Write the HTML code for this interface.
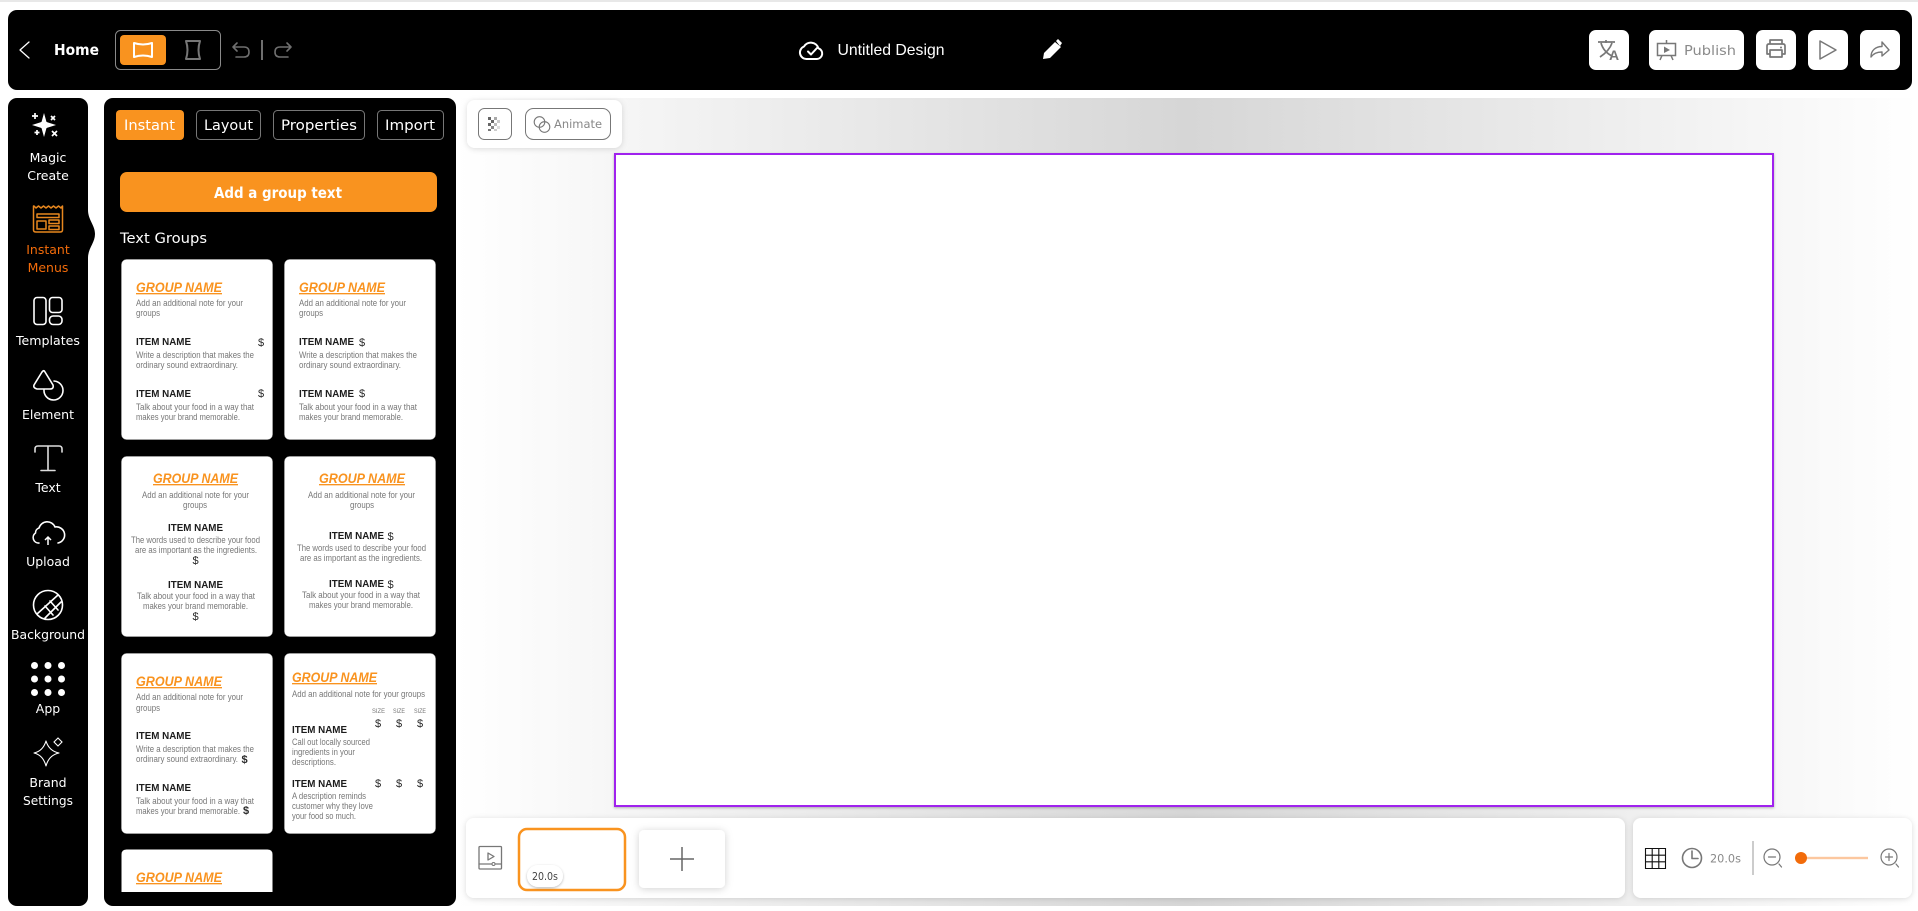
<!DOCTYPE html>
<html lang="en">
<head>
<meta charset="utf-8">
<title>Untitled Design</title>
<style>
html,body{margin:0;padding:0;width:1918px;height:911px;overflow:hidden;background:#fff}
svg{display:block;position:absolute;left:0;top:0}
text{white-space:pre}
.m{font-family:"DejaVu Sans",sans-serif}
.l{font-family:"Liberation Sans",sans-serif}
.side{font-size:12.5px;fill:#fff;text-anchor:middle}
.gn{font-family:"Liberation Sans",sans-serif;font-weight:700;font-style:italic;font-size:13.5px;fill:#f9931f;text-decoration:underline}
.n{font-family:"Liberation Sans",sans-serif;font-size:9px;fill:#777}
.i{font-family:"Liberation Sans",sans-serif;font-size:10.3px;fill:#1c1c1c;font-weight:700}
.d{font-family:"Liberation Sans",sans-serif;font-size:11px;fill:#2a2a2a}
.s{font-family:"Liberation Sans",sans-serif;font-size:6.5px;fill:#777}
.ic{fill:none;stroke:#fff;stroke-width:1.6;stroke-linecap:round;stroke-linejoin:round}
.gi{fill:none;stroke:#777;stroke-width:1.6;stroke-linecap:round;stroke-linejoin:round}
</style>
</head>
<body>
<svg width="1918" height="911" viewBox="0 0 1918 911" xmlns="http://www.w3.org/2000/svg">
<defs>
<linearGradient id="bg" gradientUnits="userSpaceOnUse" x1="456" y1="0" x2="1918" y2="0">
<stop offset="0" stop-color="#fff"/><stop offset="0.5" stop-color="#d6d6d6"/><stop offset="1" stop-color="#fff"/>
</linearGradient>
<filter id="sh" x="-10%" y="-30%" width="120%" height="160%"><feDropShadow dx="0" dy="1" stdDeviation="3" flood-color="#000" flood-opacity=".14"/></filter>
<filter id="sh2" x="-30%" y="-30%" width="160%" height="160%"><feDropShadow dx="0" dy="1" stdDeviation="4" flood-color="#000" flood-opacity=".18"/></filter>
<filter id="sh3" x="-30%" y="-30%" width="160%" height="170%"><feDropShadow dx="0" dy="1" stdDeviation="1.2" flood-color="#000" flood-opacity=".28"/></filter>
<clipPath id="panelclip"><rect x="104" y="98" width="352" height="794"/></clipPath>
</defs>

<rect x="0" y="0" width="1918" height="2" fill="#e8e8e8"/>
<rect x="456" y="98" width="1462" height="808" fill="url(#bg)"/>

<!-- canvas -->
<rect x="615" y="154" width="1158" height="652" fill="#fff" stroke="#a024ee" stroke-width="2" filter="url(#sh3)"/>

<!-- top bar -->
<rect x="8" y="10" width="1904" height="80" rx="9" fill="#000"/>
<path d="M29 42 L20 50 L29 58" fill="none" stroke="#fff" stroke-width="1.3" stroke-linecap="round" stroke-linejoin="round"/>
<text class="m" x="54" y="55" font-size="15" font-weight="700" fill="#fff" textLength="45" lengthAdjust="spacingAndGlyphs">Home</text>
<rect x="115.500" y="30.500" width="105" height="39" rx="5" fill="none" stroke="#8a8a8a"/>
<rect x="120" y="35" width="46" height="30" rx="4" fill="#f9931f"/>
<path d="M134 43 Q143 46 152 43 V57 Q143 54 134 57 Z" fill="none" stroke="#fff" stroke-width="2" stroke-linejoin="round"/>
<path d="M186 41 H200 Q197 50 200 59 H186 Q189 50 186 41 Z" fill="none" stroke="#777" stroke-width="2" stroke-linejoin="round"/>
<path d="M237 43 L233 47 L237 51 M233 47 H244 Q249 47 249 52 Q249 57 244 57 H236" fill="none" stroke="#6f6f6f" stroke-width="1.6" stroke-linecap="round" stroke-linejoin="round"/>
<rect x="261" y="40" width="2" height="20" fill="#6f6f6f"/>
<path d="M287 43 L291 47 L287 51 M291 47 H280 Q275 47 275 52 Q275 57 280 57 H288" fill="none" stroke="#6f6f6f" stroke-width="1.6" stroke-linecap="round" stroke-linejoin="round"/>

<path d="M807 59 H817 A5.500 5.500 0 0 0 818.500 48.300 A8 8 0 0 0 804 46.500 A6.500 6.500 0 0 0 807 59 Z" fill="none" stroke="#fff" stroke-width="2" stroke-linejoin="round"/>
<path d="M808 51.500 L811 54.500 L817 48" fill="none" stroke="#fff" stroke-width="2" stroke-linecap="round" stroke-linejoin="round"/>
<text class="l" x="837.500" y="55" font-size="16" fill="#fff" textLength="107" lengthAdjust="spacingAndGlyphs">Untitled Design</text>
<path d="M1043 59 L1044 53 L1055 42 L1061 47 L1050 58 Z" fill="#fff"/><path d="M1056 41 L1058 39 L1062 43 L1060 46 Z" fill="#fff"/>

<rect x="1589" y="30" width="40" height="40" rx="7" fill="#fff"/>
<path d="M1598 42 H1615 M1606 40 V43 M1601 43 C1603 50 1608 54 1612 56 M1612 43 C1610 49 1606 53 1600 57" fill="none" stroke="#777" stroke-width="1.7"/>
<text class="l" x="1609" y="60" font-size="14" font-weight="700" fill="#777">A</text>

<rect x="1649" y="30" width="95" height="40" rx="7" fill="#fff"/>
<path d="M1657.500 43.500 H1675.500 V55.500 H1657.500 Z M1666.500 40 V43.500 M1662 55.500 L1660 60 M1671 55.500 L1673 60" fill="none" stroke="#777" stroke-width="1.500"/>
<path d="M1664 46.500 L1670 50 L1664 53 Z" fill="#777"/>
<text class="m" x="1684" y="55" font-size="13.500" fill="#8a8a8a" textLength="52" lengthAdjust="spacingAndGlyphs">Publish</text>

<rect x="1756" y="30" width="40" height="40" rx="7" fill="#fff"/>
<path d="M1770 44 V40 H1782 V44 M1770 54 H1767 V46 Q1767 44 1769 44 H1783 Q1785 44 1785 46 V54 H1782 M1770 50 H1782 V57 H1770 Z" fill="none" stroke="#777" stroke-width="1.700" stroke-linejoin="round"/>
<circle cx="1781" cy="47.500" r="1" fill="#777"/>

<rect x="1808" y="30" width="40" height="40" rx="7" fill="#fff"/>
<path d="M1820 41 V59 L1836 50 Z" fill="none" stroke="#777" stroke-width="1.500" stroke-linejoin="round"/>

<rect x="1860" y="30" width="40" height="40" rx="7" fill="#fff"/>
<path d="M1871 57 C1871 50 1876 46.500 1882 46.500 V42 L1889 50 L1882 56 V52 C1877 52 1873 54 1871 57 Z" fill="none" stroke="#777" stroke-width="1.400" stroke-linejoin="round"/>

<!-- sidebar -->
<rect x="8" y="98" width="80" height="808" rx="9" fill="#000"/>
<path d="M88 210 C88 220 95 225 95 234 C95 243 88 248 88 258 Z" fill="#000"/>

<path d="M44 113 L46.500 122 L56 125 L46.500 128 L44 137 L41.500 128 L32 125 L41.500 122 Z" fill="#fff"/>
<circle cx="44" cy="125" r="4" fill="#fff"/>
<path d="M35 113 V119 M32 116 H38 M51 116 L55 120 M55 116 L51 120 M52 131 L57 136 M57 131 L52 136 M37 130 V135 M34.500 132.500 H39.500" stroke="#fff" stroke-width="1.700" fill="none"/>
<text class="m side" x="48" y="162">Magic</text>
<text class="m side" x="48" y="180">Create</text>

<g fill="none" stroke="#e8871e" stroke-width="1.500" stroke-linejoin="round">
<path d="M34 206 L36 208 L38.500 206 L41 208 L43.500 206 L46 208 L48.500 206 L51 208 L53.500 206 L56 208 L58.500 206 L61 208 L62.500 206 V230 Q62.500 232 60 232 H36 Q33.500 232 33.500 230 V206 Z"/>
<rect x="37" y="214" width="22" height="3.500"/><rect x="37" y="221" width="9" height="8"/><rect x="49" y="220" width="10" height="3.500"/><rect x="49" y="226" width="10" height="3.500"/>
</g>
<text class="m side" x="48" y="254" style="fill:#f26b0a">Instant</text>
<text class="m side" x="48" y="272" style="fill:#f26b0a">Menus</text>

<rect x="34" y="297.500" width="12" height="27" rx="3" class="ic"/>
<rect x="49.500" y="297.500" width="12.500" height="15" rx="3" class="ic"/>
<rect x="49.500" y="316" width="12.500" height="8.500" rx="3.500" class="ic"/>
<text class="m side" x="48" y="345" textLength="64" lengthAdjust="spacingAndGlyphs">Templates</text>

<path d="M43 371 Q44 370 45 372 L53 385 Q54 389 50 389 H37 Q33 388 34 385 L42 372 Z" class="ic"/>
<path d="M54 381 A9.500 9.500 0 1 1 44 390" class="ic"/>
<text class="m side" x="48" y="419" textLength="52" lengthAdjust="spacingAndGlyphs">Element</text>

<path d="M35 452 V449 Q35 446 38 446 H59 Q62 446 62 449 V452 M48 446 V470 M41 470.500 H55" fill="none" stroke="#ddd" stroke-width="1.600" stroke-linecap="round"/>
<text class="m side" x="48" y="492">Text</text>

<path d="M39 543 A5.500 5.500 0 0 1 35.500 533 A5 5 0 0 1 39 528 A8.500 8.500 0 0 1 55 527 A7 7 0 0 1 58 543" class="ic"/>
<path d="M48 545 V537 M45 540 L48 537 L51 540" fill="none" stroke="#fff" stroke-width="1.500"/>
<text class="m side" x="48" y="566">Upload</text>

<circle cx="48" cy="605" r="14.500" class="ic"/>
<path d="M37 614 L58 595 M45 618 L61 602 M45 606 L53 615 M50 601 L58 610" class="ic"/>
<text class="m side" x="48" y="639" textLength="74" lengthAdjust="spacingAndGlyphs">Background</text>

<g fill="#fff">
<circle cx="34.500" cy="665.500" r="3.500"/><circle cx="48" cy="665.500" r="3.500"/><circle cx="61.500" cy="665.500" r="3.500"/>
<circle cx="34.500" cy="679" r="3.500"/><circle cx="48" cy="679" r="3.500"/><circle cx="61.500" cy="679" r="3.500"/>
<circle cx="34.500" cy="692.500" r="3.500"/><circle cx="48" cy="692.500" r="3.500"/><circle cx="61.500" cy="692.500" r="3.500"/>
</g>
<text class="m side" x="48" y="713">App</text>

<path d="M46 741 Q49 751 59 753 Q49 755 46 766 Q43 755 34 753 Q43 751 46 741 Z" fill="none" stroke="#fff" stroke-width="1.100" stroke-linejoin="round"/>
<path d="M58 738 L62 742 L58 746 L54 742 Z" fill="none" stroke="#fff" stroke-width="1.100"/>
<text class="m side" x="48" y="787">Brand</text>
<text class="m side" x="48" y="805" textLength="50" lengthAdjust="spacingAndGlyphs">Settings</text>

<!-- panel -->
<rect x="104" y="98" width="352" height="808" rx="9" fill="#000"/>
<rect x="116" y="110" width="68" height="30" rx="4" fill="#f9931f"/>
<text class="m" x="124" y="130" font-size="14" fill="#fff" textLength="51" lengthAdjust="spacingAndGlyphs">Instant</text>
<rect x="196.500" y="110.500" width="64" height="29" rx="4" fill="none" stroke="#777"/>
<text class="m" x="204" y="130" font-size="14" fill="#fff" textLength="49" lengthAdjust="spacingAndGlyphs">Layout</text>
<rect x="273.500" y="110.500" width="91" height="29" rx="4" fill="none" stroke="#777"/>
<text class="m" x="281" y="130" font-size="14" fill="#fff" textLength="76" lengthAdjust="spacingAndGlyphs">Properties</text>
<rect x="377.500" y="110.500" width="66" height="29" rx="4" fill="none" stroke="#777"/>
<text class="m" x="385" y="130" font-size="14" fill="#fff" textLength="50" lengthAdjust="spacingAndGlyphs">Import</text>
<rect x="120" y="172" width="317" height="40" rx="7" fill="#f9931f"/>
<text class="m" x="214" y="198" font-size="15" font-weight="700" fill="#fff" textLength="128" lengthAdjust="spacingAndGlyphs">Add a group text</text>
<text class="m" x="120" y="243" font-size="14" fill="#fff" textLength="87" lengthAdjust="spacingAndGlyphs">Text Groups</text>

<g clip-path="url(#panelclip)">
<!-- card 1 -->
<rect x="121.500" y="259.500" width="151" height="180" rx="5" fill="#fff" stroke="#bbb" stroke-width=".5"/>
<text class="gn" x="136" y="292" textLength="86" lengthAdjust="spacingAndGlyphs">GROUP NAME</text>
<text class="n" x="136" y="306" textLength="107" lengthAdjust="spacingAndGlyphs">Add an additional note for your</text>
<text class="n" x="136" y="316" textLength="24" lengthAdjust="spacingAndGlyphs">groups</text>
<text class="i" x="136" y="345" textLength="55" lengthAdjust="spacingAndGlyphs">ITEM NAME</text>
<text class="d" x="258" y="346">$</text>
<text class="n" x="136" y="358" textLength="118" lengthAdjust="spacingAndGlyphs">Write a description that makes the</text>
<text class="n" x="136" y="368" textLength="102" lengthAdjust="spacingAndGlyphs">ordinary sound extraordinary.</text>
<text class="i" x="136" y="397" textLength="55" lengthAdjust="spacingAndGlyphs">ITEM NAME</text>
<text class="d" x="258" y="397">$</text>
<text class="n" x="136" y="410" textLength="118" lengthAdjust="spacingAndGlyphs">Talk about your food in a way that</text>
<text class="n" x="136" y="420" textLength="104" lengthAdjust="spacingAndGlyphs">makes your brand memorable.</text>

<!-- card 2 -->
<rect x="284.500" y="259.500" width="151" height="180" rx="5" fill="#fff" stroke="#bbb" stroke-width=".5"/>
<text class="gn" x="299" y="292" textLength="86" lengthAdjust="spacingAndGlyphs">GROUP NAME</text>
<text class="n" x="299" y="306" textLength="107" lengthAdjust="spacingAndGlyphs">Add an additional note for your</text>
<text class="n" x="299" y="316" textLength="24" lengthAdjust="spacingAndGlyphs">groups</text>
<text class="i" x="299" y="345" textLength="55" lengthAdjust="spacingAndGlyphs">ITEM NAME</text>
<text class="d" x="359" y="346">$</text>
<text class="n" x="299" y="358" textLength="118" lengthAdjust="spacingAndGlyphs">Write a description that makes the</text>
<text class="n" x="299" y="368" textLength="102" lengthAdjust="spacingAndGlyphs">ordinary sound extraordinary.</text>
<text class="i" x="299" y="397" textLength="55" lengthAdjust="spacingAndGlyphs">ITEM NAME</text>
<text class="d" x="359" y="397">$</text>
<text class="n" x="299" y="410" textLength="118" lengthAdjust="spacingAndGlyphs">Talk about your food in a way that</text>
<text class="n" x="299" y="420" textLength="104" lengthAdjust="spacingAndGlyphs">makes your brand memorable.</text>

<!-- card 3 -->
<rect x="121.500" y="456.500" width="151" height="180" rx="5" fill="#fff" stroke="#bbb" stroke-width=".5"/>
<text class="gn" x="153" y="483" textLength="85" lengthAdjust="spacingAndGlyphs">GROUP NAME</text>
<text class="n" x="142" y="498" textLength="107" lengthAdjust="spacingAndGlyphs">Add an additional note for your</text>
<text class="n" x="183" y="508" textLength="24" lengthAdjust="spacingAndGlyphs">groups</text>
<text class="i" x="168" y="531" textLength="55" lengthAdjust="spacingAndGlyphs">ITEM NAME</text>
<text class="n" x="131" y="543" textLength="129" lengthAdjust="spacingAndGlyphs">The words used to describe your food</text>
<text class="n" x="135" y="553" textLength="122" lengthAdjust="spacingAndGlyphs">are as important as the ingredients.</text>
<text class="d" x="192.500" y="564">$</text>
<text class="i" x="168" y="588" textLength="55" lengthAdjust="spacingAndGlyphs">ITEM NAME</text>
<text class="n" x="137" y="599" textLength="118" lengthAdjust="spacingAndGlyphs">Talk about your food in a way that</text>
<text class="n" x="143" y="609" textLength="105" lengthAdjust="spacingAndGlyphs">makes your brand memorable.</text>
<text class="d" x="192.500" y="620">$</text>

<!-- card 4 -->
<rect x="284.500" y="456.500" width="151" height="180" rx="5" fill="#fff" stroke="#bbb" stroke-width=".5"/>
<text class="gn" x="319" y="483" textLength="86" lengthAdjust="spacingAndGlyphs">GROUP NAME</text>
<text class="n" x="308" y="498" textLength="107" lengthAdjust="spacingAndGlyphs">Add an additional note for your</text>
<text class="n" x="350" y="508" textLength="24" lengthAdjust="spacingAndGlyphs">groups</text>
<text class="i" x="329" y="539" textLength="55" lengthAdjust="spacingAndGlyphs">ITEM NAME</text>
<text class="d" x="387.500" y="540">$</text>
<text class="n" x="297" y="551" textLength="129" lengthAdjust="spacingAndGlyphs">The words used to describe your food</text>
<text class="n" x="300" y="561" textLength="122" lengthAdjust="spacingAndGlyphs">are as important as the ingredients.</text>
<text class="i" x="329" y="587" textLength="55" lengthAdjust="spacingAndGlyphs">ITEM NAME</text>
<text class="d" x="387.500" y="588">$</text>
<text class="n" x="302" y="598" textLength="118" lengthAdjust="spacingAndGlyphs">Talk about your food in a way that</text>
<text class="n" x="309" y="608" textLength="104" lengthAdjust="spacingAndGlyphs">makes your brand memorable.</text>

<!-- card 5 -->
<rect x="121.500" y="653.500" width="151" height="180" rx="5" fill="#fff" stroke="#bbb" stroke-width=".5"/>
<text class="gn" x="136" y="686" textLength="86" lengthAdjust="spacingAndGlyphs">GROUP NAME</text>
<text class="n" x="136" y="700" textLength="107" lengthAdjust="spacingAndGlyphs">Add an additional note for your</text>
<text class="n" x="136" y="711" textLength="24" lengthAdjust="spacingAndGlyphs">groups</text>
<text class="i" x="136" y="739" textLength="55" lengthAdjust="spacingAndGlyphs">ITEM NAME</text>
<text class="n" x="136" y="752" textLength="118" lengthAdjust="spacingAndGlyphs">Write a description that makes the</text>
<text class="n" x="136" y="762" textLength="102" lengthAdjust="spacingAndGlyphs">ordinary sound extraordinary.</text>
<text class="d" x="241.500" y="763" font-weight="700">$</text>
<text class="i" x="136" y="791" textLength="55" lengthAdjust="spacingAndGlyphs">ITEM NAME</text>
<text class="n" x="136" y="804" textLength="118" lengthAdjust="spacingAndGlyphs">Talk about your food in a way that</text>
<text class="n" x="136" y="814" textLength="104" lengthAdjust="spacingAndGlyphs">makes your brand memorable.</text>
<text class="d" x="243" y="814" font-weight="700">$</text>

<!-- card 6 -->
<rect x="284.500" y="653.500" width="151" height="180" rx="5" fill="#fff" stroke="#bbb" stroke-width=".5"/>
<text class="gn" x="292" y="682" textLength="85" lengthAdjust="spacingAndGlyphs">GROUP NAME</text>
<text class="n" x="292" y="697" textLength="133" lengthAdjust="spacingAndGlyphs">Add an additional note for your groups</text>
<text class="s" x="372" y="713" textLength="13" lengthAdjust="spacingAndGlyphs">SIZE</text>
<text class="s" x="393" y="713" textLength="12" lengthAdjust="spacingAndGlyphs">SIZE</text>
<text class="s" x="414" y="713" textLength="12" lengthAdjust="spacingAndGlyphs">SIZE</text>
<text class="d" x="375" y="727">$</text>
<text class="d" x="396" y="727">$</text>
<text class="d" x="417" y="727">$</text>
<text class="i" x="292" y="733" textLength="55" lengthAdjust="spacingAndGlyphs">ITEM NAME</text>
<text class="n" x="292" y="745" textLength="78" lengthAdjust="spacingAndGlyphs">Call out locally sourced</text>
<text class="n" x="292" y="755" textLength="63" lengthAdjust="spacingAndGlyphs">ingredients in your</text>
<text class="n" x="292" y="765" textLength="44" lengthAdjust="spacingAndGlyphs">descriptions.</text>
<text class="i" x="292" y="787" textLength="55" lengthAdjust="spacingAndGlyphs">ITEM NAME</text>
<text class="d" x="375" y="787">$</text>
<text class="d" x="396" y="787">$</text>
<text class="d" x="417" y="787">$</text>
<text class="n" x="292" y="799" textLength="74" lengthAdjust="spacingAndGlyphs">A description reminds</text>
<text class="n" x="292" y="809" textLength="81" lengthAdjust="spacingAndGlyphs">customer why they love</text>
<text class="n" x="292" y="819" textLength="64" lengthAdjust="spacingAndGlyphs">your food so much.</text>

<!-- card 7 -->
<path d="M121.500 892 V854.500 Q121.500 849.500 126.500 849.500 H267.500 Q272.500 849.500 272.500 854.500 V892 Z" fill="#fff"/>
<text class="gn" x="136" y="882" textLength="86" lengthAdjust="spacingAndGlyphs">GROUP NAME</text>
</g>

<!-- tool pill -->
<rect x="467" y="100" width="155" height="48" rx="8" fill="#fff" filter="url(#sh)"/>
<rect x="478.500" y="108.500" width="33" height="31" rx="6" fill="#fff" stroke="#777"/>
<g fill="#666">
<rect x="488" y="117" width="3" height="3"/><rect x="494" y="117" width="3" height="3" fill="#aaa"/><rect x="491" y="120" width="3" height="3"/><rect x="497" y="120" width="3" height="3" fill="#ccc"/>
<rect x="488" y="123" width="3" height="3"/><rect x="494" y="123" width="3" height="3" fill="#bbb"/><rect x="491" y="126" width="3" height="3" fill="#888"/><rect x="497" y="126" width="3" height="3" fill="#ddd"/>
<rect x="488" y="129" width="3" height="2" fill="#777"/><rect x="494" y="129" width="3" height="2" fill="#ccc"/>
</g>
<rect x="525.500" y="108.500" width="85" height="31" rx="8" fill="#fff" stroke="#777"/>
<circle cx="539.500" cy="122" r="5.300" class="gi" style="stroke-width:1.100"/>
<circle cx="544.500" cy="127" r="5.300" class="gi" style="stroke-width:1.100"/>
<text class="m" x="554" y="128" font-size="11.500" fill="#888" textLength="48" lengthAdjust="spacingAndGlyphs">Animate</text>

<!-- timeline -->
<rect x="466" y="818" width="1159" height="80" rx="8" fill="#fff" filter="url(#sh)"/>
<rect x="479" y="846.500" width="22.500" height="22.500" rx="1" class="gi" style="stroke-width:1.300"/>
<path d="M479 864 H501 M488 853 V860 L494 856.500 Z" class="gi" style="stroke-width:1.300"/>
<circle cx="493.500" cy="864" r="1.500" fill="#fff" stroke="#777"/>
<rect x="519" y="829" width="106" height="61" rx="8" fill="#fff" stroke="#f9931f" stroke-width="2.500"/>
<rect x="527" y="865" width="36" height="22" rx="11" fill="#fff" filter="url(#sh3)"/>
<text class="m" x="532" y="880" font-size="11" fill="#444" textLength="26" lengthAdjust="spacingAndGlyphs">20.0s</text>
<rect x="639" y="830" width="86" height="58" rx="5" fill="#fff" filter="url(#sh2)"/>
<path d="M670 859 H694 M682 847 V871" stroke="#666" stroke-width="1.500"/>

<!-- zoom bar -->
<rect x="1633" y="818" width="279" height="80" rx="8" fill="#fff" filter="url(#sh)"/>
<path d="M1645.500 848.500 H1665.500 V868.500 H1645.500 Z M1652.200 848.500 V868.500 M1658.800 848.500 V868.500 M1645.500 855.200 H1665.500 M1645.500 861.800 H1665.500" fill="none" stroke="#111" stroke-width="1.100"/>
<circle cx="1692" cy="858" r="9.500" class="gi"/>
<path d="M1692 851 V858.500 H1698" class="gi"/>
<text class="m" x="1710" y="862.500" font-size="11.500" fill="#8a8a8a" textLength="31" lengthAdjust="spacingAndGlyphs">20.0s</text>
<rect x="1752" y="841" width="2" height="34" fill="#ccc"/>
<circle cx="1772" cy="857" r="8" class="gi" style="stroke-width:1.200"/>
<path d="M1768.500 857 H1775.500 M1779 864 L1781.500 867" class="gi" style="stroke-width:1.200"/>
<rect x="1795" y="856.800" width="73" height="2.400" fill="#fcc79f"/>
<circle cx="1801" cy="858" r="6" fill="#f26b0a"/>
<circle cx="1889" cy="857" r="8" class="gi" style="stroke-width:1.200"/>
<path d="M1885.500 857 H1892.500 M1889 853.500 V860.500 M1896 864 L1898.500 867" class="gi" style="stroke-width:1.200"/>
</svg>
</body>
</html>
